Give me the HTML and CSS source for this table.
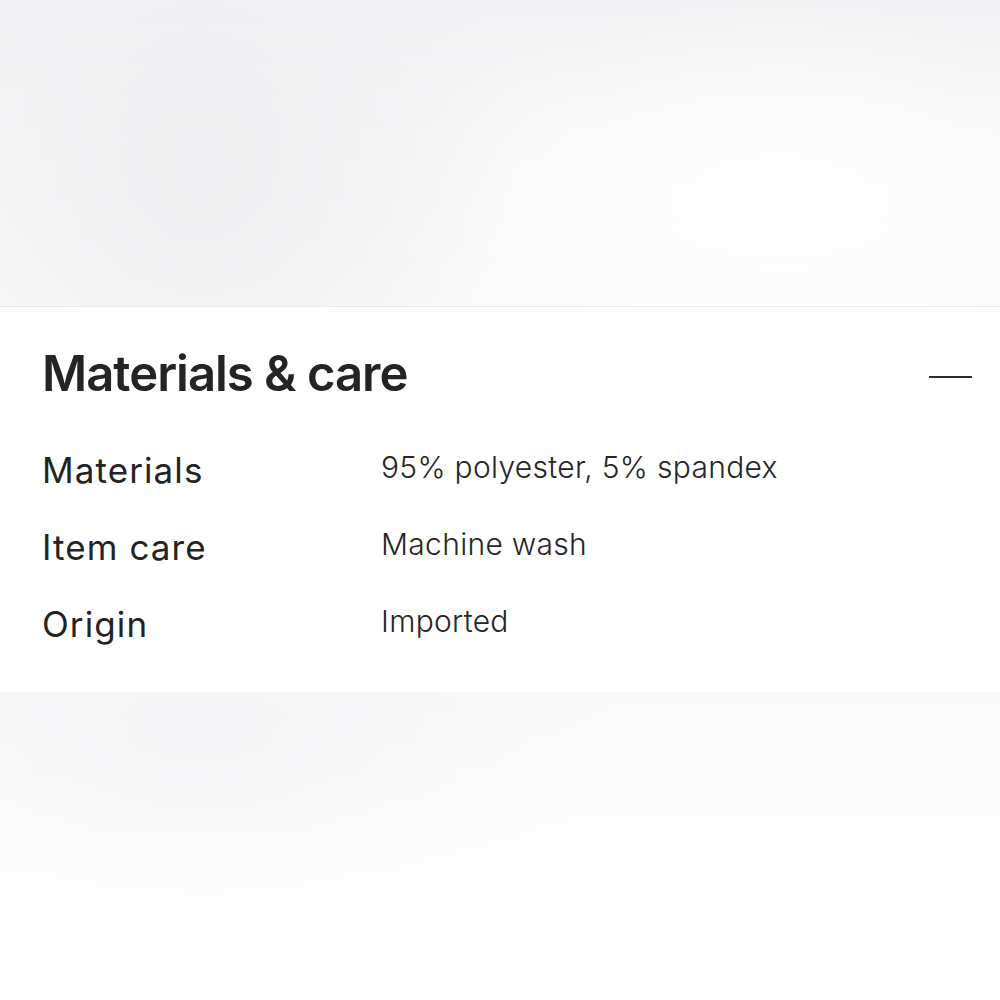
FILE: index.html
```html
<!DOCTYPE html>
<html>
<head>
<meta charset="utf-8">
<link rel="stylesheet" href="styles.css">
</head>
<body>
<div class="top-bg"></div>
<section class="panel">
  <div class="panel-head">
    <h2 class="title">Materials &amp; care</h2>
    <span class="minus" aria-label="Collapse"></span>
  </div>
  <dl class="specs">
    <div class="row"><dt>Materials</dt><dd>95% polyester, 5% spandex</dd></div>
    <div class="row"><dt>Item care</dt><dd>Machine wash</dd></div>
    <div class="row"><dt>Origin</dt><dd>Imported</dd></div>
  </dl>
</section>
<div class="bottom-bg"></div>
</body>
</html>
```
FILE: styles.css
```css
html, body { margin: 0; padding: 0; }
body {
  width: 1000px;
  height: 1000px;
  overflow: hidden;
  font-family: Inter, "Noto Sans", sans-serif;
  color: #222;
  background: #fcfcfc;
}
.top-bg {
  height: 306px;
  border-bottom: 1px solid #e8e8ea;
  background:
    radial-gradient(ellipse 320px 360px at 200px 170px, #efeff1 0%, rgba(240,240,242,0.6) 50%, rgba(255,255,255,0) 100%),
    radial-gradient(ellipse 420px 200px at 780px 200px, #ffffff 0%, rgba(255,255,255,0) 100%),
    linear-gradient(180deg, #f2f2f4 0%, #f7f7f8 60%, #fafafa 100%);
}
.panel {
  background: #fff;
  padding: 39px 28px 0 42px;
  height: 385px;
  box-sizing: border-box;
}
.panel-head {
  display: flex;
  justify-content: space-between;
  align-items: center;
  height: 56px;
}
.title {
  margin: 0;
  font-size: 49px;
  line-height: 56px;
  font-weight: 600;
  letter-spacing: -1px;
  color: #242426;
}
.minus {
  width: 43px;
  height: 2px;
  margin-top: 5px;
  background: #2a2a2c;
}
.specs { margin: 48px 0 0; }
.row {
  display: flex;
  align-items: flex-start;
  height: 77px;
}
dt {
  width: 339px;
  font-size: 35px;
  line-height: 40px;
  font-weight: 400;
  letter-spacing: 1.1px;
  color: #232325;
}
dd {
  margin: 0;
  font-size: 30px;
  line-height: 34px;
  font-weight: 300;
  letter-spacing: 0.3px;
  color: #262628;
}
.bottom-bg {
  height: 309px;
  background:
    radial-gradient(ellipse 420px 200px at 200px 40px, #f5f5f7 0%, rgba(255,255,255,0) 100%),
    linear-gradient(180deg, #f9f9fa 0%, #ffffff 60%, #ffffff 100%);
}
```
